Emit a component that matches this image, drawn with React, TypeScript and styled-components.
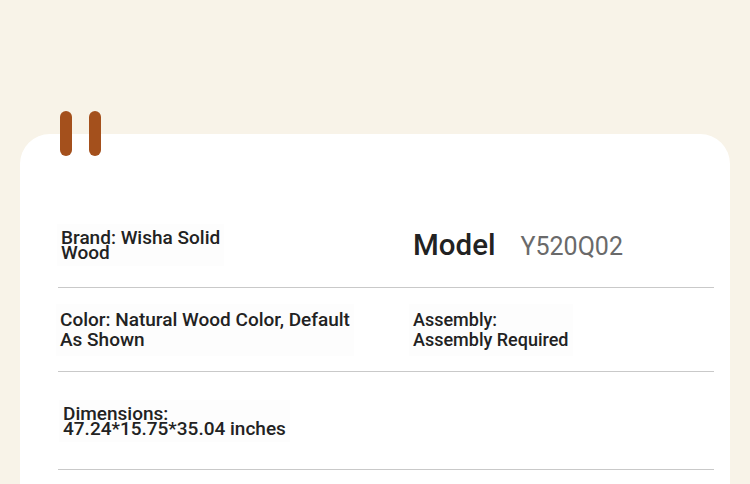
import React from "react";
import styled, { createGlobalStyle } from "styled-components";

const GlobalStyle = createGlobalStyle`
  html, body {
    margin: 0;
    padding: 0;
    background: #f8f3e8;
  }
  body {
    font-family: Roboto, "Liberation Sans", Arial, sans-serif;
    color: #222;
  }
`;

const Page = styled.div`
  height: 484px;
  overflow: hidden;
  padding-top: 111px;
  box-sizing: border-box;
`;

const Tabs = styled.div`
  display: flex;
  gap: 17px;
  padding-left: 60px;
  margin-bottom: -22px;
  position: relative;
  z-index: 1;
`;

const Tab = styled.span`
  display: block;
  width: 12px;
  height: 45px;
  border-radius: 6px;
  background: #a4501c;
`;

const Card = styled.div`
  margin: 0 20px;
  background: #fff;
  border-radius: 30px 30px 0 0;
  padding: 69px 16px 40px 38px;
`;

const Row = styled.div<{ $h: number }>`
  display: grid;
  grid-template-columns: 355px 1fr;
  align-items: center;
  height: ${(p) => p.$h}px;
  box-sizing: border-box;
  border-bottom: 1px solid #c9c9c9;
`;

const Cell = styled.div<{ $dx?: number }>`
  padding-left: ${(p) => p.$dx ?? 0}px;
`;

const Label = styled.div<{ $lh: number; $size?: number }>`
  display: inline-block;
  font-size: ${(p) => p.$size ?? 19}px;
  font-weight: 500;
  line-height: ${(p) => p.$lh}px;
  color: #222;
  background: #fdfdfd;
  padding: 6px 4px;
  margin-left: -4px;
`;

const ModelWrap = styled.div`
  display: flex;
  align-items: baseline;
  gap: 25px;
`;

const ModelTitle = styled.span`
  font-size: 29.5px;
  font-weight: 500;
  color: #222;
`;

const ModelCode = styled.span`
  font-size: 25px;
  font-weight: 400;
  color: #6a6a6a;
`;

export default function App() {
  return (
    <Page>
      <GlobalStyle />
      <Tabs>
        <Tab />
        <Tab />
      </Tabs>
      <Card>
        <Row $h={85}>
          <Cell $dx={3}>
            <Label $lh={15}>
              Brand: Wisha Solid
              <br />
              Wood
            </Label>
          </Cell>
          <Cell>
            <ModelWrap>
              <ModelTitle>Model</ModelTitle>
              <ModelCode>Y520Q02</ModelCode>
            </ModelWrap>
          </Cell>
        </Row>
        <Row $h={84}>
          <Cell $dx={2}>
            <Label $lh={20} $size={19}>
              Color: Natural Wood Color, Default
              <br />
              As Shown
            </Label>
          </Cell>
          <Cell>
            <Label $lh={20} $size={18}>
              Assembly:
              <br />
              Assembly Required
            </Label>
          </Cell>
        </Row>
        <Row $h={98}>
          <Cell $dx={5}>
            <Label $lh={15}>
              Dimensions:
              <br />
              47.24*15.75*35.04 inches
            </Label>
          </Cell>
          <Cell />
        </Row>
      </Card>
    </Page>
  );
}
